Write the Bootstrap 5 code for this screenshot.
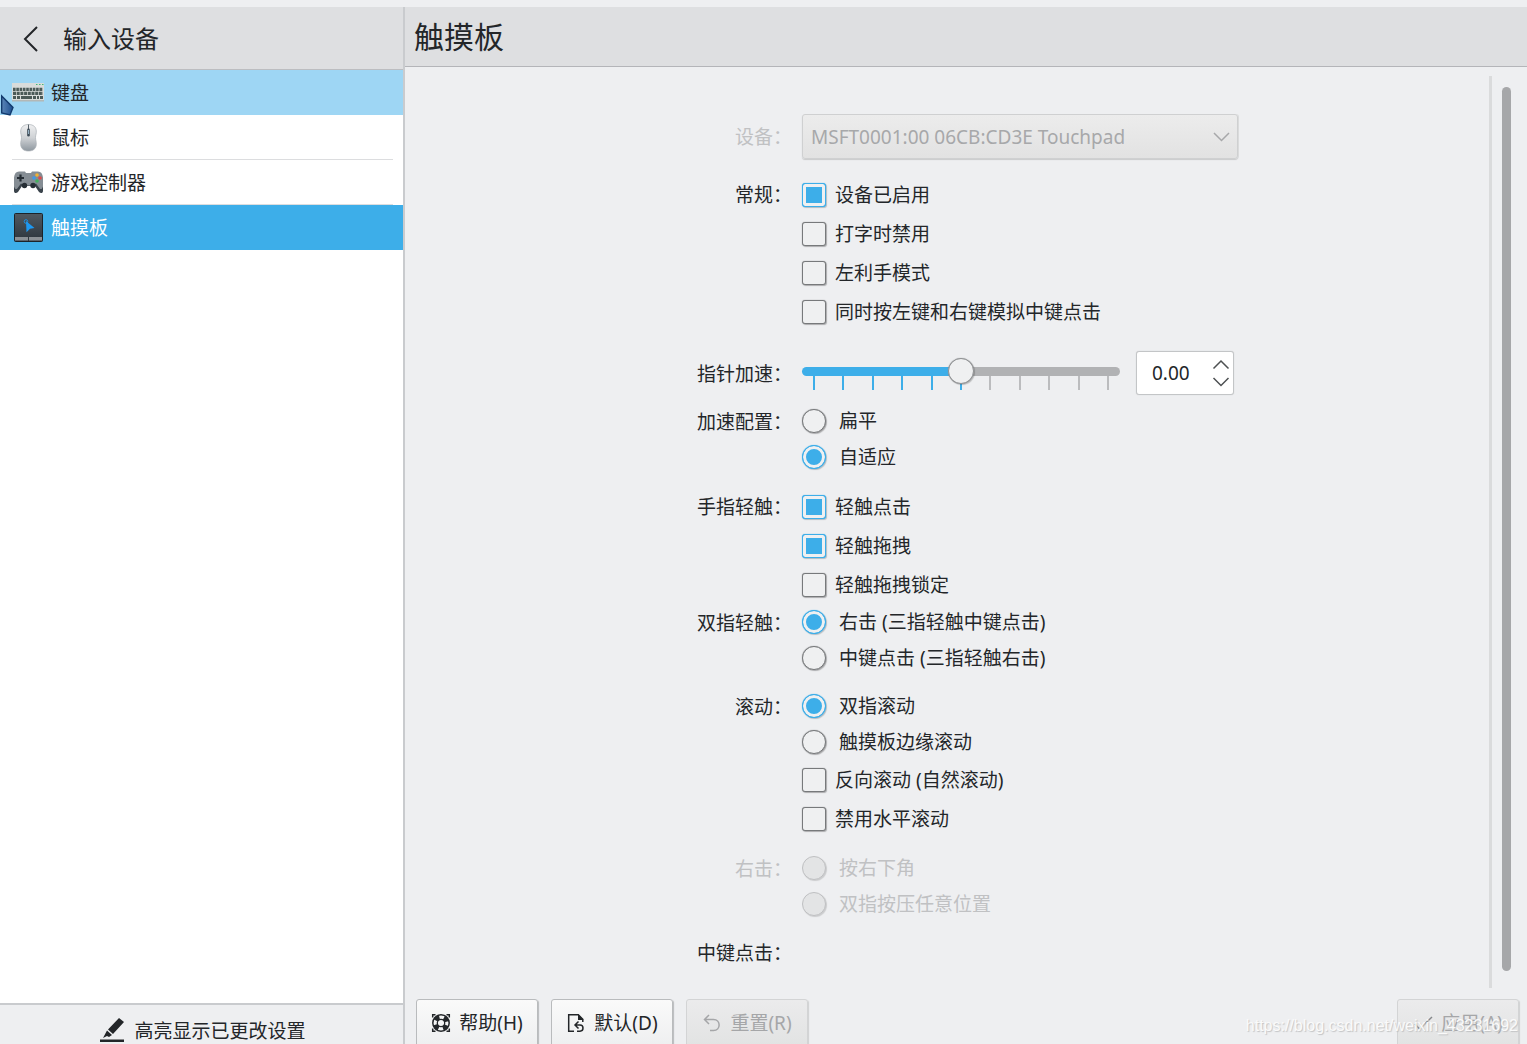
<!DOCTYPE html>
<html lang="zh-CN">
<head>
<meta charset="utf-8">
<meta name="viewport" content="width=device-width, initial-scale=1">
<title>输入设备 - 触摸板</title>
<link href="https://cdn.jsdelivr.net/npm/bootstrap@5.3.0/dist/css/bootstrap.min.css" rel="stylesheet">
<style>
:root{--hl:#3daee9;--win:#eeeff1;--head:#dedfe1;--ink:#232629;--line:#c9cbce}
body{font-family:"Noto Sans","Noto Sans CJK SC",sans-serif;font-size:19px;line-height:28px;color:var(--ink);background:var(--win)}
.shell{padding-top:7px}
.side{width:405px;border-right:2px solid var(--line)}
.side-head{height:63px;background:var(--head);border-bottom:1px solid #bcbdc0;font-size:24px;padding:2px 0 0 22px;gap:24px}
.side-head h2{font-size:24px;line-height:36px;font-weight:400}
.back{width:17px;height:28px;color:var(--ink)}
.devices{--bs-list-group-color:var(--ink)}
.devices .list-group-item{border:0;height:45px;padding:0 10px 0 12px;background:#fff;color:var(--ink)}
.devices .inner{height:45px;gap:7px;padding-top:2px;border-bottom:1px solid #dcdddf}
.devices .hovered{background:#9ed6f4}
.devices .list-group-item.active{background:var(--hl);color:#fff}
.devices .hovered .inner,.devices .active .inner{border-color:transparent}
.pointer{left:0;top:94px;z-index:5}
.side-foot{height:41px;border-top:2px solid var(--line)}
.side-foot button{padding:12px 0 0 2px;gap:9px;color:var(--ink);white-space:nowrap}
.main-head{height:60px;background:var(--head);border-bottom:1px solid #b4b5b9;padding-left:9px}
.main-head h1{font-size:30px;line-height:44px;font-weight:400}
.pane{margin-top:9px;padding:38px 0 0 41px;border-right:3px solid #dadbdc}
.rail{width:35px;padding:20px 16px 17px 10px}
.thumb{width:9px;border-radius:5px;background:#a6a7a9}
.settings{width:541px}
.section{display:grid;grid-template-columns:95px 1fr;column-gap:10px;margin-bottom:12px}
.section.flush{margin-bottom:0}
.section.first{margin-bottom:16px}
.section.general{margin-bottom:20px}
.section.speed{margin-bottom:8px}
.caption{text-align:right;white-space:nowrap;line-height:38px;height:36px}
.caption.tall{line-height:40px}
.caption.big{line-height:46px}
.faded{color:#c0c1c3}
.opt{margin:0;padding:0;min-height:0;height:36px;gap:13px}
.opt.box{height:39px;gap:9px}
.opt .form-check-input{float:none;flex:none;margin:0;width:24px;height:24px;border:1px solid #77797b;background-color:#eff0f1;background-image:none;box-shadow:0 0 1px #77797b,1px 1px 1px rgba(0,0,0,.25);opacity:1}
.opt .form-check-input[type=checkbox]{border-radius:3px}
.opt .form-check-input:checked{border-color:var(--hl);background-color:var(--hl);box-shadow:inset 0 0 0 3px #eff0f1,0 0 1px var(--hl),1px 1px 1px rgba(0,0,0,.2)}
.opt .form-check-input:disabled{border-color:#bfc0c2;background-color:#e3e4e5;box-shadow:1px 1px 1px rgba(0,0,0,.15)}
.opt .form-check-label,.opt .form-check-input:disabled~.form-check-label{opacity:1}
.opt.box .form-check-label{padding-top:1px}
.drop{height:45px}
.drop .form-select{height:45px;padding:0 40px 0 8px;font-size:19px;line-height:28px;color:#a7a8aa;opacity:1;border:1px solid #cfd0d1;border-radius:3px;background:linear-gradient(#ececec,#e2e2e2);box-shadow:0 1px 1px #c9cacb,1px 0 0 #dcdddd}
.drop svg{right:8px;top:17px;pointer-events:none}
.speedrow{gap:16px;height:44px}
.slide{width:318px;padding-top:7px}
.slide .form-range{display:block;position:relative;z-index:1;height:26px;padding:0;border-radius:5px}
.slide .form-range::-webkit-slider-runnable-track{height:9px;border-radius:5px;background:linear-gradient(90deg,var(--hl) 50%,#b1b2b4 50%)}
.slide .form-range::-webkit-slider-thumb{width:26px;height:26px;margin-top:-9px;background:#eff0f1;border:1px solid #8f9193;box-shadow:0 0 1px #8f9193,1px 1px 1px rgba(0,0,0,.2)}
.ticks{height:14px;margin-top:-8px;padding:0 11px}
.ticks i{width:2px;background:#bbbcbe}
.ticks i.on{background:var(--hl)}
.spin{width:98px;background:#fff;border:1px solid #c3c5c7;border-radius:3px;box-shadow:0 0 1px #c3c5c7}
.spin input{width:71px;padding:0 0 0 15px;border:0;background:none;font-size:19px;color:var(--ink)}
.spin button{width:18px;height:17px;line-height:0}
.bar{height:45px;margin-top:11px;padding:0 8px 0 11px;gap:13px}
.bar .btn{height:48px;width:122px;padding:0;gap:8px;font-size:19px;color:var(--ink);border:1px solid #b9bbbd;border-radius:3px;background:linear-gradient(#fafafa,#eeeff0);box-shadow:1px 1px 1px #b9bbbd;white-space:nowrap}
.bar .btn:disabled{color:#a5a6a8;opacity:1;border-color:#d3d4d5;background:linear-gradient(#ebebec,#e2e3e3);box-shadow:1px 1px 1px #d0d1d2}
.stamp{right:9px;bottom:6px;font:16px/24px "Liberation Sans",sans-serif;color:#fafafa;text-shadow:1px 1px 1px #c2c3c4;pointer-events:none;z-index:3}
</style>
</head>
<body>
<div class="shell vh-100 d-flex overflow-hidden position-relative">
  <aside class="side d-flex flex-column flex-shrink-0">
    <header class="side-head d-flex align-items-center flex-shrink-0">
      <button class="back btn p-0 border-0 d-flex align-items-center" type="button" aria-label="返回"><svg width="17" height="26" viewBox="0 0 17 26" fill="none" stroke="currentColor" stroke-width="2"><path d="M15 1 3 13l12 12"/></svg></button>
      <h2 class="m-0">输入设备</h2>
    </header>
    <nav class="devices list-group list-group-flush rounded-0 flex-grow-1 bg-white">
      <a href="#" class="list-group-item hovered"><span class="inner d-flex align-items-center">
        <svg width="32" height="32" viewBox="0 0 32 32"><path fill="#d9dcdb" d="M0 6h32v18H0z"/><path fill="#b3b8b7" d="M0 23h32v1.500H0z"/><path stroke="#4b5a58" stroke-width="3.200" stroke-dasharray="2.600 .7" d="M1 12.300h30"/><path stroke="#4b5a58" stroke-width="3.200" stroke-dasharray="3 .7" d="M1 16.400h30"/><path stroke="#4b5a58" stroke-width="3" d="M1 20.600h3m1 0h3m1 0h11m1 0h3m1 0h2m1 0h3"/><path stroke="#3fb878" d="M24 7.500h1.500m1.500 0h1.500m1.500 0h1.500"/></svg>
        <span>键盘</span></span></a>
      <a href="#" class="list-group-item"><span class="inner d-flex align-items-center">
        <svg width="32" height="32" viewBox="0 0 32 32"><defs><linearGradient id="gm" x2="0" y2="1"><stop stop-color="#eff0f1"/><stop offset=".5" stop-color="#cfd2d5"/><stop offset="1" stop-color="#8e979f"/></linearGradient></defs><path fill="url(#gm)" stroke="#a9afb4" stroke-width=".7" d="M16.500 2.500c5 0 7.500 2.500 7.800 6.500.2 3-.8 4-.8 6.500s1 4 .8 7c-.3 4.500-3.500 6.500-7.800 6.500s-7.500-2-7.800-6.500c-.2-3 .8-4.500.8-7s-1-3.500-.8-6.500c.3-4 2.800-6.500 7.800-6.500z"/><path d="M16.500 2.500V7" stroke="#59636b"/><rect x="15.200" y="6.500" width="2.600" height="8" rx="1.300" fill="#3c4a56"/><path d="M16.500 8v4" stroke="#a9c9de" stroke-width=".8"/></svg>
        <span>鼠标</span></span></a>
      <a href="#" class="list-group-item"><span class="inner d-flex align-items-center">
        <svg width="32" height="32" viewBox="0 0 32 32"><path fill="#3a434b" d="M2 15v9c0 2 2 3 4 1l4-6h13l4 6c2 2 4 1 4-1v-9z"/><path fill="#858d94" d="M7 4.500h6l1 1.500h5l1-1.500h6c3 0 4.500 2 5 6v9c-1 3-2.500 3.500-4 1l-3-4-3 2H12l-3-2-3 4c-1.500 2.500-3 2-4-1v-9c.5-4 2-6 5-6z"/><path stroke="#252d34" stroke-width="2.200" d="M5 11h7m-3.500-3.500v7"/><circle cx="25" cy="8" r="1.800" fill="#f2b233"/><circle cx="22" cy="11" r="1.800" fill="#3d9ae8"/><circle cx="28" cy="11" r="1.800" fill="#df4a4a"/><circle cx="25" cy="14" r="1.800" fill="#43b15e"/><circle cx="12.500" cy="18.500" r="2.700" fill="#262e35"/><circle cx="21" cy="18.500" r="2.700" fill="#262e35"/></svg>
        <span>游戏控制器</span></span></a>
      <a href="#" class="list-group-item active mt-0" aria-current="page"><span class="inner d-flex align-items-center">
        <svg width="32" height="32" viewBox="0 0 32 32"><defs><linearGradient id="gt" x2="0" y2="1"><stop stop-color="#505961"/><stop offset="1" stop-color="#2c343c"/></linearGradient></defs><rect x="2.500" y="1.500" width="28" height="28" rx="1" fill="url(#gt)" stroke="#1c2329"/><path fill="#8b9095" d="M3 25h13v3.500H3zm14 0h13v3.500H17z"/><circle cx="14" cy="9.500" r="1.800" fill="none" stroke="#1d8fe0"/><path fill="#1d99f3" d="m14 9 8.500 7-4.500.7-3.500 3.600z"/></svg>
        <span>触摸板</span></span></a>
    </nav>
    <footer class="side-foot flex-shrink-0 d-flex justify-content-center">
      <button type="button" class="bg-transparent border-0 d-flex align-items-start"><svg width="26" height="26" viewBox="0 0 26 26" fill="#232629"><path d="M1 22.500h24V25H1zM20 1l5 4-11 12-5-4.500zM8 13.500l5 4.500-3 2-2-1-4 2z"/></svg><span>高亮显示已更改设置</span></button>
    </footer>
  </aside>

  <main class="d-flex flex-column flex-grow-1">
    <header class="main-head d-flex align-items-center flex-shrink-0"><h1 class="m-0">触摸板</h1></header>
    <div class="d-flex flex-grow-1">
      <div class="pane flex-grow-1 d-flex justify-content-center">
        <form class="settings">
          <div class="section first">
            <label class="caption big faded" for="device">设备：</label>
            <div class="drop position-relative"><select id="device" class="form-select" disabled><option>MSFT0001:00 06CB:CD3E Touchpad</option></select><svg class="position-absolute" width="17" height="12" viewBox="0 0 17 12" fill="none" stroke="#a7a8aa" stroke-width="1.500"><path d="m1 2 7.500 7.500L16 2"/></svg></div>
          </div>
          <div class="section general" role="group" aria-labelledby="g1">
            <div class="caption tall" id="g1">常规：</div>
            <div>
              <div class="form-check opt box d-flex align-items-center"><input class="form-check-input" type="checkbox" id="c1" checked><label class="form-check-label" for="c1">设备已启用</label></div>
              <div class="form-check opt box d-flex align-items-center"><input class="form-check-input" type="checkbox" id="c2"><label class="form-check-label" for="c2">打字时禁用</label></div>
              <div class="form-check opt box d-flex align-items-center"><input class="form-check-input" type="checkbox" id="c3"><label class="form-check-label" for="c3">左利手模式</label></div>
              <div class="form-check opt box d-flex align-items-center"><input class="form-check-input" type="checkbox" id="c4"><label class="form-check-label" for="c4">同时按左键和右键模拟中键点击</label></div>
            </div>
          </div>
          <div class="section speed">
            <label class="caption big" for="accel">指针加速：</label>
            <div class="speedrow d-flex">
              <div class="slide">
                <input type="range" class="form-range" id="accel" min="-1" max="1" step="0.2" value="0">
                <div class="ticks d-flex justify-content-between"><i class="on"></i><i class="on"></i><i class="on"></i><i class="on"></i><i class="on"></i><i class="on"></i><i></i><i></i><i></i><i></i><i></i></div>
              </div>
              <div class="spin d-flex align-items-center">
                <input type="text" value="0.00" aria-label="指针加速数值">
                <div class="d-flex flex-column ms-1">
                  <button type="button" class="btn p-0 border-0" aria-label="增加"><svg width="18" height="12" viewBox="0 0 18 12" fill="none" stroke="#4d5052" stroke-width="1.500"><path d="m1.500 9.500 7.500-7.500 7.500 7.500"/></svg></button>
                  <button type="button" class="btn p-0 border-0" aria-label="减少"><svg width="18" height="12" viewBox="0 0 18 12" fill="none" stroke="#4d5052" stroke-width="1.500"><path d="m1.500 2 7.500 7.500L16.500 2"/></svg></button>
                </div>
              </div>
            </div>
          </div>
          <div class="section" role="radiogroup" aria-labelledby="g2">
            <div class="caption" id="g2">加速配置：</div>
            <div>
              <div class="form-check opt d-flex align-items-center"><input class="form-check-input" type="radio" name="profile" id="r1"><label class="form-check-label" for="r1">扁平</label></div>
              <div class="form-check opt d-flex align-items-center"><input class="form-check-input" type="radio" name="profile" id="r2" checked><label class="form-check-label" for="r2">自适应</label></div>
            </div>
          </div>
          <div class="section flush" role="group" aria-labelledby="g3">
            <div class="caption tall" id="g3">手指轻触：</div>
            <div>
              <div class="form-check opt box d-flex align-items-center"><input class="form-check-input" type="checkbox" id="c5" checked><label class="form-check-label" for="c5">轻触点击</label></div>
              <div class="form-check opt box d-flex align-items-center"><input class="form-check-input" type="checkbox" id="c6" checked><label class="form-check-label" for="c6">轻触拖拽</label></div>
              <div class="form-check opt box d-flex align-items-center"><input class="form-check-input" type="checkbox" id="c7"><label class="form-check-label" for="c7">轻触拖拽锁定</label></div>
            </div>
          </div>
          <div class="section" role="radiogroup" aria-labelledby="g4">
            <div class="caption" id="g4">双指轻触：</div>
            <div>
              <div class="form-check opt d-flex align-items-center"><input class="form-check-input" type="radio" name="twofinger" id="r3" checked><label class="form-check-label" for="r3">右击 (三指轻触中键点击)</label></div>
              <div class="form-check opt d-flex align-items-center"><input class="form-check-input" type="radio" name="twofinger" id="r4"><label class="form-check-label" for="r4">中键点击 (三指轻触右击)</label></div>
            </div>
          </div>
          <div class="section" role="group" aria-labelledby="g5">
            <div class="caption" id="g5">滚动：</div>
            <div>
              <div class="form-check opt d-flex align-items-center"><input class="form-check-input" type="radio" name="scroll" id="r5" checked><label class="form-check-label" for="r5">双指滚动</label></div>
              <div class="form-check opt d-flex align-items-center"><input class="form-check-input" type="radio" name="scroll" id="r6"><label class="form-check-label" for="r6">触摸板边缘滚动</label></div>
              <div class="form-check opt box d-flex align-items-center"><input class="form-check-input" type="checkbox" id="c8"><label class="form-check-label" for="c8">反向滚动 (自然滚动)</label></div>
              <div class="form-check opt box d-flex align-items-center"><input class="form-check-input" type="checkbox" id="c9"><label class="form-check-label" for="c9">禁用水平滚动</label></div>
            </div>
          </div>
          <div class="section faded" role="radiogroup" aria-labelledby="g6">
            <div class="caption" id="g6">右击：</div>
            <div>
              <div class="form-check opt d-flex align-items-center"><input class="form-check-input" type="radio" name="rightclick" id="r7" disabled><label class="form-check-label" for="r7">按右下角</label></div>
              <div class="form-check opt d-flex align-items-center"><input class="form-check-input" type="radio" name="rightclick" id="r8" disabled><label class="form-check-label" for="r8">双指按压任意位置</label></div>
            </div>
          </div>
          <div class="section flush"><div class="caption">中键点击：</div></div>
        </form>
      </div>
      <div class="rail d-flex flex-shrink-0"><div class="thumb"></div></div>
    </div>
    <footer class="bar d-flex flex-shrink-0 align-items-start">
      <button type="button" class="btn d-flex align-items-center justify-content-center"><svg width="20" height="20" viewBox="0 0 20 20" fill="none" stroke="currentColor"><path stroke-width="1.500" d="M1.700 4.500V1.700h2.800m11 0h2.800v2.800M1.700 15.500v2.800h2.800m11 0h2.800v-2.800"/><circle cx="10" cy="10" r="8.200" stroke-width="1.500"/><circle cx="10" cy="10" r="6" stroke-width="5" stroke-dasharray="4.700 4.720" stroke-dashoffset="-2.350"/><circle cx="10" cy="10" r="3.700" stroke-width="1.300"/></svg><span>帮助(H)</span></button>
      <button type="button" class="btn d-flex align-items-center justify-content-center"><svg width="20" height="20" viewBox="0 0 20 20" fill="none" stroke="currentColor" stroke-width="1.500"><path d="M8 18.200H2.700V1.800h9.600l4.500 4.500V9"/><path fill="currentColor" stroke="none" d="M12 1v6h5.500z"/><path d="M12.500 8.500 9 12l3.500 3.500M9.500 12H14c4 0 4 6.200 0 6.200h-3"/></svg><span>默认(D)</span></button>
      <button type="button" class="btn d-flex align-items-center justify-content-center" disabled><svg width="20" height="20" viewBox="0 0 20 20" fill="none" stroke="currentColor" stroke-width="1.500"><path d="M7 2 2.500 6.500 7 11M3 6.500h8.500c7.500 0 7.500 11 0 11H8"/></svg><span>重置(R)</span></button>
      <button type="button" class="btn d-flex align-items-center justify-content-center ms-auto" disabled><svg width="20" height="20" viewBox="0 0 20 20" fill="none" stroke="#85878a" stroke-width="1.500"><path d="m2 11 4.500 5L19 4"/></svg><span>应用(A)</span></button>
    </footer>
  </main>
  <svg class="pointer position-absolute" width="15" height="24" viewBox="0 0 15 24"><defs><linearGradient id="gp" x2="1"><stop stop-color="#5b86b8"/><stop offset="1" stop-color="#1d4f8f"/></linearGradient></defs><path fill="url(#gp)" stroke="#123a6d" stroke-width="1.400" d="M1.700 2 13 13.500 10 21l-8.300-2z"/></svg>
  <div class="stamp position-absolute">https://blog.csdn.net/weixin_43231692</div>
</div>
<script src="https://cdn.jsdelivr.net/npm/bootstrap@5.3.0/dist/js/bootstrap.bundle.min.js"></script>
</body>
</html>
